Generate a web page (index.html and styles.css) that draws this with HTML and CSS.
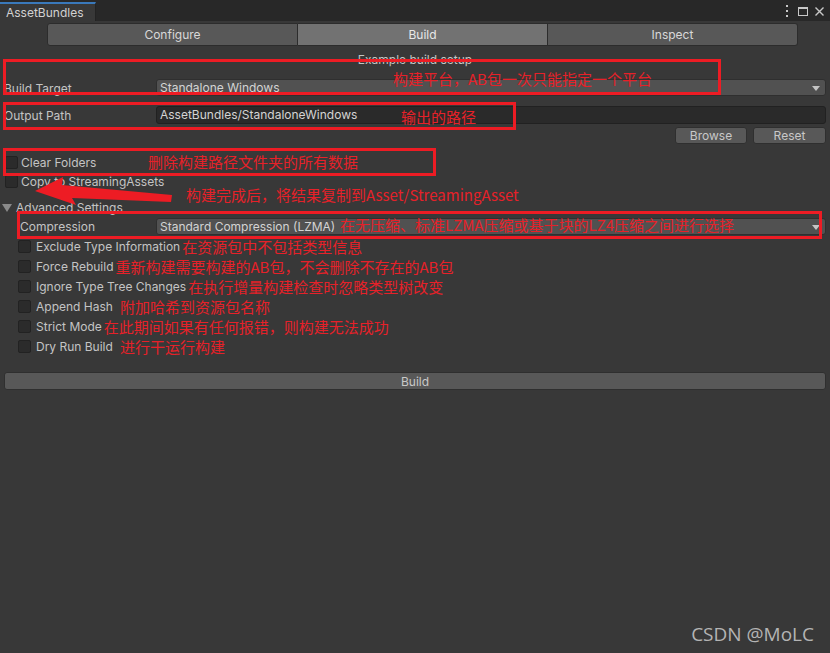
FILE: index.html
```html
<!DOCTYPE html>
<html lang="en">
<head>
  <meta charset="UTF-8">
  <title>AssetBundles</title>
  <link rel="stylesheet" href="styles.css">
</head>
<body>
  <div class="titlebar">
    <div class="tab">AssetBundles</div>
    <div class="win-icons">
      <svg class="kebab" width="6" height="12" viewBox="0 0 6 12"><rect x="2" y="0" width="2" height="2" fill="#c8c8c8"/><rect x="2" y="5" width="2" height="2" fill="#c8c8c8"/><rect x="2" y="10" width="2" height="2" fill="#c8c8c8"/></svg>
      <svg width="10" height="9" viewBox="0 0 10 9"><rect x="0.5" y="0.5" width="9" height="8" fill="none" stroke="#c8c8c8"/><rect x="0" y="0" width="10" height="2" fill="#c8c8c8"/></svg>
      <svg width="9" height="9" viewBox="0 0 9 9"><path d="M0.5 0.5 L8.5 8.5 M8.5 0.5 L0.5 8.5" stroke="#c8c8c8" stroke-width="1.4"/></svg>
    </div>
  </div>

  <div class="toolbar">
    <button class="seg">Configure</button>
    <button class="seg on">Build</button>
    <button class="seg">Inspect</button>
  </div>

  <div class="content">
    <div class="caption">Example build setup</div>

    <div class="row field-row target">
      <div class="label">Build Target</div>
      <div class="popup">Standalone Windows</div>
    </div>

    <div class="row field-row path">
      <div class="label">Output Path</div>
      <div class="textfield">AssetBundles/StandaloneWindows</div>
    </div>

    <div class="row buttons">
      <button class="btn browse">Browse</button>
      <button class="btn reset">Reset</button>
    </div>

    <div class="row toggle first">
      <span class="check"></span><span class="label">Clear Folders</span>
    </div>
    <div class="row toggle">
      <span class="check"></span><span class="label">Copy to StreamingAssets</span>
    </div>

    <div class="row foldout">
      <span class="arrow-down"></span><span class="label">Advanced Settings</span>
    </div>

    <div class="advanced">
      <div class="row field-row compression">
        <div class="label">Compression</div>
        <div class="popup">Standard Compression (LZMA)</div>
      </div>

      <div class="opts">
        <div class="opt"><span class="check"></span><span class="label">Exclude Type Information</span><span class="note">在资源包中不包括类型信息</span></div>
        <div class="opt"><span class="check"></span><span class="label">Force Rebuild</span><span class="note">重新构建需要构建的AB包，不会删除不存在的AB包</span></div>
        <div class="opt"><span class="check"></span><span class="label">Ignore Type Tree Changes</span><span class="note">在执行增量构建检查时忽略类型树改变</span></div>
        <div class="opt"><span class="check"></span><span class="label">Append Hash</span><span class="note wide">附加哈希到资源包名称</span></div>
        <div class="opt"><span class="check"></span><span class="label">Strict Mode</span><span class="note">在此期间如果有任何报错，则构建无法成功</span></div>
        <div class="opt"><span class="check"></span><span class="label">Dry Run Build</span><span class="note wide">进行干运行构建</span></div>
      </div>
    </div>

    <button class="btn build">Build</button>
  </div>

  <div class="notes">
    <div class="box box-target"></div>
    <div class="box box-path"></div>
    <div class="box box-clear"></div>
    <div class="box box-compress"></div>

    <div class="tip tip-target">构建平台，AB包一次只能指定一个平台</div>
    <div class="tip tip-path">输出的路径</div>
    <div class="tip tip-clear">删除构建路径文件夹的所有数据</div>
    <div class="tip tip-copy">构建完成后，将结果复制到Asset/StreamingAsset</div>
    <div class="tip tip-compress">在无压缩、标准LZMA压缩或基于块的LZ4压缩之间进行选择</div>

    <svg class="pointer" width="180" height="40" viewBox="0 170 180 40">
      <polygon points="35,191 63,177 62,185 172,195 171,202 72,198 76,205" fill="#ed1c24"/>
    </svg>
  </div>

  <div class="watermark">CSDN @MoLC</div>
</body>
</html>
```

FILE: styles.css
```css
html {
    height: 100%;
}
body {
    margin: 0;
    width: 830px;
    height: 653px;
    position: relative;
    overflow: hidden;
    background-color: #383838;
    font-family: Inter, "Noto Sans", sans-serif;
    font-size: 12px;
    color: #c4c4c4;
}
button {
    font-family: inherit;
    font-size: 12px;
    margin: 0;
    padding: 0;
    cursor: pointer;
}

.titlebar {
    height: 21px;
    background-color: #282828;
    display: flex;
    align-items: flex-end;
    justify-content: space-between;
}
.tab {
    box-sizing: border-box;
    width: 96px;
    height: 19px;
    padding-left: 6px;
    line-height: 17px;
    background-color: #383838;
    border-top: 2px solid #3a79bb;
    border-right: 1px solid #232323;
    color: #d2d2d2;
}
.win-icons {
    align-self: center;
    display: flex;
    align-items: center;
    gap: 7px;
    padding-right: 6px;
    padding-top: 1px;
}
.win-icons .kebab {
    margin-right: 1px;
}

.toolbar {
    display: flex;
    height: 23px;
    margin: 2px 32px 0 47px;
}
.seg {
    flex: 1;
    background-color: #585858;
    border: 1px solid #2c2c2c;
    border-left: none;
    color: #d8d8d8;
}
.seg:first-child {
    border-left: 1px solid #2c2c2c;
    border-radius: 3px 0 0 3px;
}
.seg:last-child {
    border-radius: 0 3px 3px 0;
}
.seg.on {
    background-color: #727272;
    color: #e8e8e8;
}

.content {
    padding: 0 4px;
}
.caption {
    margin-top: 7px;
    line-height: 14px;
    text-align: center;
}

.row {
    display: flex;
    align-items: center;
}
.field-row .label {
    width: 152px;
    flex: none;
}
.target {
    margin-top: 12px;
    height: 17px;
}
.target .label {
    padding-top: 2px;
}
.popup {
    flex: 1;
    box-sizing: border-box;
    height: 17px;
    line-height: 15px;
    padding-left: 3px;
    background-color: #515151;
    border: 1px solid #2f2f2f;
    border-radius: 3px;
    color: #d4d4d4;
    position: relative;
}
.popup::after {
    content: "";
    position: absolute;
    right: 5px;
    top: 6px;
    border-left: 4px solid transparent;
    border-right: 4px solid transparent;
    border-top: 5px solid #c4c4c4;
}
.path {
    margin-top: 10px;
    height: 18px;
}
.textfield {
    flex: 1;
    box-sizing: border-box;
    height: 18px;
    line-height: 16px;
    padding-left: 3px;
    background-color: #2a2a2a;
    border: 1px solid #212121;
    border-radius: 3px;
    color: #d4d4d4;
}
.buttons {
    margin-top: 3px;
    justify-content: flex-end;
    gap: 6px;
}
.btn {
    box-sizing: border-box;
    height: 17px;
    background-color: #585858;
    border: 1px solid #2f2f2f;
    border-radius: 3px;
    color: #c8c8c8;
}
.browse {
    width: 72px;
}
.reset {
    width: 73px;
}

.check {
    box-sizing: border-box;
    flex: none;
    width: 13px;
    height: 13px;
    background-color: #2b2b2b;
    border: 1px solid #222222;
    border-radius: 2px;
}
.toggle {
    height: 18px;
    margin-top: 1px;
}
.toggle.first {
    margin-top: 9px;
}
.toggle .check {
    margin-left: 1px;
    margin-right: 3px;
}
.foldout {
    height: 18px;
    margin-top: 8px;
}
.arrow-down {
    width: 0;
    height: 0;
    margin: 1px 4px 0 -2px;
    border-left: 5px solid transparent;
    border-right: 5px solid transparent;
    border-top: 8px solid #8a8a8a;
}

.advanced {
    padding-left: 16px;
}
.compression {
    margin-top: 2px;
    height: 17px;
}
.compression .label {
    width: 136px;
}
.opts {
    margin-top: 1px;
}
.opt {
    display: flex;
    align-items: center;
    height: 20px;
}
.opt .check {
    margin-left: -2px;
    margin-right: 5px;
}
.note {
    margin-left: 2px;
    font-family: "Noto Sans CJK SC", sans-serif;
    font-size: 15px;
    color: #e62129;
}
.note.wide {
    margin-left: 7px;
}

.build {
    display: block;
    width: 100%;
    height: 18px;
    margin-top: 16px;
}

.notes {
    position: absolute;
    left: 0;
    top: 0;
    width: 830px;
    height: 653px;
    pointer-events: none;
}
.box {
    position: absolute;
    box-sizing: border-box;
    border: 3px solid #ed1c24;
}
.box-target {
    left: 3px;
    top: 59px;
    width: 718px;
    height: 36px;
}
.box-path {
    left: 3px;
    top: 102px;
    width: 513px;
    height: 28px;
}
.box-clear {
    left: 3px;
    top: 148px;
    width: 433px;
    height: 28px;
}
.box-compress {
    left: 17px;
    top: 211px;
    width: 805px;
    height: 28px;
}
.tip {
    position: absolute;
    font-family: "Noto Sans CJK SC", sans-serif;
    font-size: 15px;
    line-height: 20px;
    color: #e62129;
    white-space: nowrap;
}
.tip-target {
    left: 393px;
    top: 69px;
}
.tip-path {
    left: 401px;
    top: 107px;
}
.tip-clear {
    left: 148px;
    top: 152px;
}
.tip-copy {
    left: 186px;
    top: 185px;
}
.tip-compress {
    left: 340px;
    top: 215px;
}
.pointer {
    position: absolute;
    left: 0;
    top: 170px;
}

.watermark {
    position: absolute;
    right: 16px;
    bottom: 6px;
    font-family: "Open Sans", "Noto Sans", sans-serif;
    font-size: 19px;
    color: #b4b4b4;
}
```
